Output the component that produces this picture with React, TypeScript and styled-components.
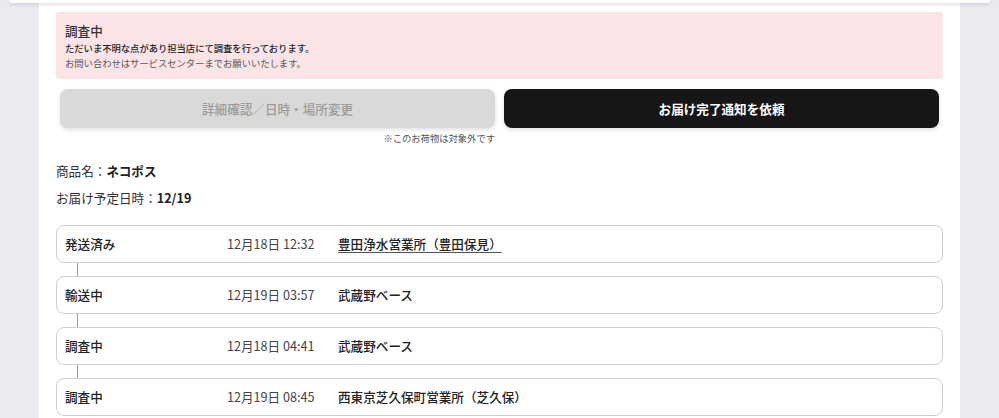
import styled, { createGlobalStyle } from "styled-components";

const GlobalStyle = createGlobalStyle`
  html, body {
    margin: 0;
    padding: 0;
    background: #ebeaf0;
  }
  body {
    font-family: "Noto Sans CJK JP", "Noto Sans", sans-serif;
    color: #222;
  }
`;

const Page = styled.div`
  display: flex;
  flex-direction: column;
  min-height: 418px;
  overflow: hidden;
`;

const TopCard = styled.div`
  position: relative;
  z-index: 2;
  height: 3px;
  margin: 0 9px;
  background: #fff;
  border-radius: 0 0 12px 12px;
  box-shadow: 0 1px 4px rgba(0, 0, 0, 0.18);
`;

const Panel = styled.main`
  margin: -3px 39px 0;
  padding: 12px 17px 0;
  background: #fff;
  display: flex;
  flex-direction: column;
  min-height: 420px;
`;

const Alert = styled.section`
  background: #fbe4e6;
  border-radius: 3px;
  padding: 10px 9px 8px;
`;

const AlertTitle = styled.h2`
  margin: 0 0 1px;
  font-size: 12.6px;
  line-height: 17.6px;
  font-weight: 500;
  color: #333;
`;

const AlertText = styled.p<{ $strong?: boolean }>`
  margin: 0;
  font-size: 9.3px;
  line-height: 15px;
  font-weight: ${(p) => (p.$strong ? 500 : 400)};
  color: ${(p) => (p.$strong ? "#222" : "#555")};
`;

const ButtonRow = styled.div`
  display: grid;
  grid-template-columns: 1fr 1fr;
  gap: 9px;
  padding: 0 4px;
  margin-top: 10px;
`;

const ButtonCol = styled.div`
  display: flex;
  flex-direction: column;
  align-items: flex-end;
`;

const ActionButton = styled.button<{ $dark?: boolean }>`
  width: 100%;
  height: 39px;
  border: none;
  border-radius: 8px;
  font-family: inherit;
  font-size: 12.6px;
  font-weight: ${(p) => (p.$dark ? 700 : 500)};
  background: ${(p) => (p.$dark ? "#161616" : "#d9d9d9")};
  color: ${(p) => (p.$dark ? "#fff" : "#9b9b9b")};
  box-shadow: 0 2px 4px rgba(0, 0, 0, 0.12);
`;

const Note = styled.span`
  margin-top: 4px;
  font-size: 9.3px;
  line-height: 13px;
  color: #555;
`;

const Info = styled.p`
  margin: 0;
  font-size: 12.6px;
  line-height: 27px;
  color: #333;

  b {
    font-weight: 700;
    color: #222;
  }
`;

const InfoBlock = styled.div`
  margin-top: 12px;
  margin-bottom: 14px;
`;

const Timeline = styled.ol`
  list-style: none;
  margin: 0;
  padding: 0;
  display: flex;
  flex-direction: column;
`;

const Step = styled.li`
  display: flex;
  flex-direction: column;

  &:not(:last-child)::after {
    content: "";
    width: 1px;
    height: 13px;
    margin-left: 21px;
    background: #9a9a9a;
  }
`;

const StepCard = styled.div`
  display: grid;
  grid-template-columns: 162px 111px 1fr;
  align-items: center;
  height: 38px;
  box-sizing: border-box;
  padding: 0 8px;
  border: 1px solid #cfcfcf;
  border-radius: 8px;
  font-size: 12.6px;
`;

const Status = styled.span`
  font-weight: 500;
  color: #222;
`;

const Time = styled.span`
  color: #444;
`;

const Place = styled.span<{ $link?: boolean }>`
  font-weight: 500;
  color: #222;
  text-decoration: ${(p) => (p.$link ? "underline" : "none")};
  text-underline-offset: 3px;
  text-decoration-color: #555;
`;

const steps = [
  { status: "発送済み", time: "12月18日 12:32", place: "豊田浄水営業所（豊田保見）", link: true },
  { status: "輸送中", time: "12月19日 03:57", place: "武蔵野ベース" },
  { status: "調査中", time: "12月18日 04:41", place: "武蔵野ベース" },
  { status: "調査中", time: "12月19日 08:45", place: "西東京芝久保町営業所（芝久保）" },
];

export default function App() {
  return (
    <>
      <GlobalStyle />
      <Page>
        <TopCard />
        <Panel>
          <Alert>
            <AlertTitle>調査中</AlertTitle>
            <AlertText $strong>ただいま不明な点があり担当店にて調査を行っております。</AlertText>
            <AlertText>お問い合わせはサービスセンターまでお願いいたします。</AlertText>
          </Alert>
          <ButtonRow>
            <ButtonCol>
              <ActionButton>詳細確認／日時・場所変更</ActionButton>
              <Note>※このお荷物は対象外です</Note>
            </ButtonCol>
            <ButtonCol>
              <ActionButton $dark>お届け完了通知を依頼</ActionButton>
            </ButtonCol>
          </ButtonRow>
          <InfoBlock>
            <Info>
              商品名：<b>ネコポス</b>
            </Info>
            <Info>
              お届け予定日時：<b>12/19</b>
            </Info>
          </InfoBlock>
          <Timeline>
            {steps.map((s, i) => (
              <Step key={i}>
                <StepCard>
                  <Status>{s.status}</Status>
                  <Time>{s.time}</Time>
                  <Place $link={s.link}>{s.place}</Place>
                </StepCard>
              </Step>
            ))}
          </Timeline>
        </Panel>
      </Page>
    </>
  );
}
